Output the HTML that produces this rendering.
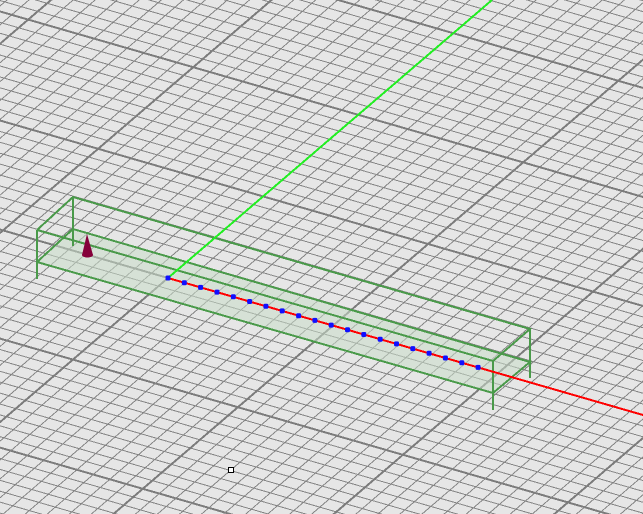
<!DOCTYPE html>
<html><head><meta charset="utf-8"><style>
html,body{margin:0;padding:0;background:#e6e6e6;overflow:hidden;width:643px;height:514px}
svg{display:block;position:absolute;left:0;top:0}
</style></head><body>
<svg id="s" width="643" height="514" viewBox="0 0 643 514" xmlns="http://www.w3.org/2000/svg">
<rect width="643" height="514" fill="#e6e6e6"/>
<g id="grid" shape-rendering="crispEdges"></g>
<polygon points="37,262 73,229 530,362 493,393" fill="#c8dcc8" fill-opacity="0.55"/>
<g stroke="#4a9a4a" stroke-width="2" fill="none" shape-rendering="crispEdges">
<polyline points="37,230 73,197 530,329 493,361 37,230"/>
<polyline points="37,262 73,229 530,362 493,393 37,262"/>
<line x1="37" y1="230" x2="37" y2="279"/>
<line x1="73" y1="197" x2="73" y2="246"/>
<line x1="530" y1="329" x2="530" y2="378"/>
<line x1="493" y1="361" x2="493" y2="410"/>
</g>
<line x1="168" y1="278" x2="492" y2="0" stroke="#22ee22" stroke-width="2" shape-rendering="crispEdges"/>
<line x1="168" y1="278" x2="643" y2="415" stroke="#ff0000" stroke-width="2" shape-rendering="crispEdges"/>
<g id="dots" fill="#1010ff"></g>
<path d="M87,234 L82,255 Q87,260 93,255 Z" fill="#85003a"/>
<ellipse cx="87.5" cy="255" rx="5.5" ry="2.5" fill="#85003a"/>
<rect x="228.5" y="467.5" width="5" height="5" fill="#fff" stroke="#000" stroke-width="1"/>
</svg>
<script>
var ox=168,oy=278,ux=16.5,uy=4.76,vx=9.51,vy=-8.16;
function P(u,v){return [(ox+u*ux+v*vx).toFixed(1),(oy+u*uy+v*vy).toFixed(1)];}
var h='';
for(var i=-80;i<=80;i++){
 var m=(Math.abs(i)%10===0);
 var w=m?2:1,c=m?'#7c7c7c':'#858585';
 var a=P(-120,i),b=P(120,i);
 h+='<line x1="'+a[0]+'" y1="'+a[1]+'" x2="'+b[0]+'" y2="'+b[1]+'" stroke="'+c+'" stroke-width="'+w+'"/>';
 a=P(i,-120);b=P(i,120);
 h+='<line x1="'+a[0]+'" y1="'+a[1]+'" x2="'+b[0]+'" y2="'+b[1]+'" stroke="'+c+'" stroke-width="'+w+'"/>';
}
document.getElementById('grid').innerHTML=h;
var hd='';
for(var k=0;k<20;k++){var x=168+k*16.32,y=278+(x-168)*0.2884;hd+='<rect x="'+(x-2.5).toFixed(1)+'" y="'+(y-2.5).toFixed(1)+'" width="5" height="5" rx="1.5"/>';}
document.getElementById('dots').innerHTML=hd;
</script>
</body></html>
